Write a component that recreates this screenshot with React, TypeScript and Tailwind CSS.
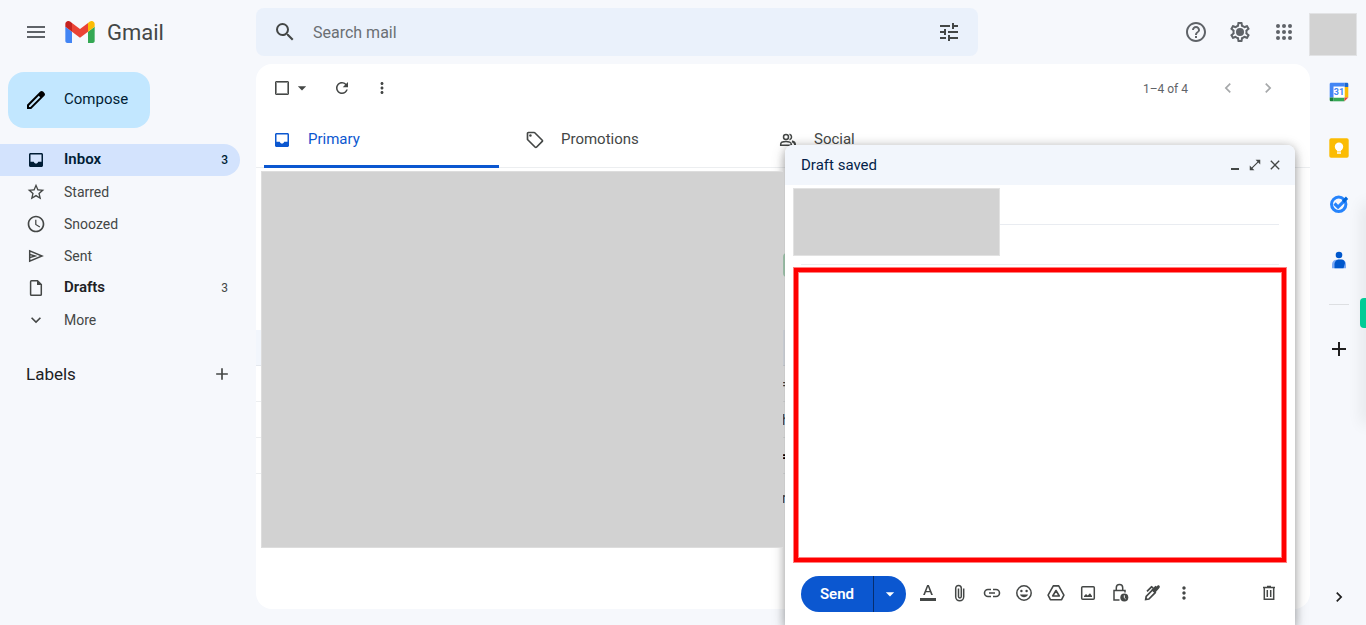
import React, { useState } from 'react';
import clsx from 'clsx';
import {
  MdAccessTime,
  MdAdd,
  MdArrowDropDown,
  MdChevronLeft,
  MdChevronRight,
  MdClose,
  MdHelpOutline,
  MdKeyboardArrowDown,
  MdMenu,
  MdMoreVert,
  MdOpenInFull,
  MdOutlineLocalOffer,
  MdRefresh,
  MdSearch,
  MdStarBorder,
  MdTune,
} from 'react-icons/md';

interface IconProps {
  className?: string;
}

type IconType = React.ComponentType<IconProps>;

const GmailLogo: React.FC<IconProps> = ({ className }) => (
  <svg viewBox="52 42 88 66" className={className} aria-hidden="true">
    <path fill="#4285f4" d="M58 108h14V74L52 59v43c0 3.32 2.69 6 6 6" />
    <path fill="#34a853" d="M120 108h14c3.32 0 6-2.69 6-6V59l-20 15" />
    <path fill="#fbbc04" d="M120 48v26l20-15v-8c0-7.42-8.47-11.65-14.4-7.2" />
    <path fill="#ea4335" d="M72 74V48l24 18 24-18v26L96 92" />
    <path fill="#c5221f" d="M52 51v8l20 15V48l-5.6-4.2c-5.94-4.45-14.4-.22-14.4 7.2" />
  </svg>
);

const PencilIcon: React.FC<IconProps> = ({ className }) => (
  <svg viewBox="0 0 24 24" fill="currentColor" className={className} aria-hidden="true">
    <path d="M20.41 4.94l-1.35-1.35c-.78-.78-2.05-.78-2.83 0L3 16.82V21h4.18L20.41 7.77c.79-.78.79-2.05 0-2.83zm-14 14.12L5 19v-1.36l9.82-9.82 1.41 1.41-9.82 9.83z" />
  </svg>
);

const GearIcon: React.FC<IconProps> = ({ className }) => (
  <svg viewBox="0 0 24 24" fill="currentColor" className={className} aria-hidden="true">
    <path d="M19.43 12.98c.04-.32.07-.64.07-.98 0-.34-.03-.66-.07-.98l2.11-1.65c.19-.15.24-.42.12-.64l-2-3.46a.5.5 0 0 0-.61-.22l-2.49 1c-.52-.4-1.08-.73-1.69-.98l-.38-2.65A.488.488 0 0 0 14 2h-4c-.25 0-.46.18-.49.42l-.38 2.65c-.61.25-1.17.59-1.69.98l-2.49-1a.566.566 0 0 0-.18-.03c-.17 0-.34.09-.43.25l-2 3.46c-.13.22-.07.49.12.64l2.11 1.65c-.04.32-.07.65-.07.98 0 .33.03.66.07.98l-2.11 1.65c-.19.15-.24.42-.12.64l2 3.46a.5.5 0 0 0 .61.22l2.49-1c.52.4 1.08.73 1.69.98l.38 2.65c.03.24.24.42.49.42h4c.25 0 .46-.18.49-.42l.38-2.65c.61-.25 1.17-.59 1.69-.98l2.49 1c.06.02.12.03.18.03.17 0 .34-.09.43-.25l2-3.46c.12-.22.07-.49-.12-.64l-2.11-1.65zm-1.98-1.71c.04.31.05.52.05.73 0 .21-.02.43-.05.73l-.14 1.13.89.7 1.08.84-.7 1.21-1.27-.51-1.04-.42-.9.68c-.43.32-.84.56-1.25.73l-1.06.43-.16 1.13-.2 1.35h-1.4l-.19-1.35-.16-1.13-1.06-.43c-.43-.18-.83-.41-1.23-.71l-.91-.7-1.06.43-1.27.51-.7-1.21 1.08-.84.89-.7-.14-1.13c-.03-.31-.05-.54-.05-.74s.02-.43.05-.73l.14-1.13-.89-.7-1.08-.84.7-1.21 1.27.51 1.04.42.9-.68c.43-.32.84-.56 1.25-.73l1.06-.43.16-1.13.2-1.35h1.39l.19 1.35.16 1.13 1.06.43c.43.18.83.41 1.23.71l.91.7 1.06-.43 1.27-.51.7 1.21-1.07.85-.89.7.14 1.13z" />
    <circle cx="12" cy="12" r="4" />
  </svg>
);

const AppsIcon: React.FC<IconProps> = ({ className }) => (
  <svg viewBox="0 0 24 24" fill="currentColor" className={className} aria-hidden="true">
    {[6, 12, 18].map((y) => [6, 12, 18].map((x) => <circle key={`${x}-${y}`} cx={x} cy={y} r="2" />))}
  </svg>
);

const InboxIcon: React.FC<IconProps> = ({ className }) => (
  <svg viewBox="0 0 20 20" fill="currentColor" fillRule="evenodd" className={className} aria-hidden="true">
    <path d="M4.500 3h11c.8 0 1.500.7 1.500 1.500v11c0 .8-.7 1.500-1.500 1.500h-11c-.8 0-1.500-.7-1.500-1.500v-11C3 3.700 3.700 3 4.500 3zm0 1.500v7.200h3.300c.3 1.100 1.100 1.800 2.200 1.800s1.900-.7 2.200-1.800h3.300V4.500z" />
  </svg>
);

const SentIcon: React.FC<IconProps> = ({ className }) => (
  <svg viewBox="0 0 20 20" fill="none" stroke="currentColor" strokeWidth="1.5" className={className} aria-hidden="true">
    <path d="M3.7 4.8v10.4L16 10 3.7 4.8zM3.7 8.4L9 10l-5.3 1.6" />
  </svg>
);

const DraftIcon: React.FC<IconProps> = ({ className }) => (
  <svg viewBox="0 0 20 20" fill="none" className={className} aria-hidden="true">
    <path d="M5.500 2.800h6l3.800 3.800v9.800c0 .5-.4.900-.9.900H5.500c-.5 0-.9-.4-.9-.9V3.700c0-.5.4-.9.900-.9z" stroke="currentColor" strokeWidth="1.500" />
    <path d="M11 2.500V7h4.500z" fill="currentColor" />
  </svg>
);

const PeopleIcon: React.FC<IconProps> = ({ className }) => (
  <svg viewBox="0 0 20 20" fill="none" stroke="currentColor" strokeWidth="1.500" className={className} aria-hidden="true">
    <circle cx="8" cy="7" r="2.500" />
    <path d="M2.700 15.300v-1.100c0-1.600 2.600-2.700 5.300-2.700s5.300 1.100 5.300 2.700v1.100z" />
    <path d="M11.500 4.300a2.800 2.800 0 0 1 0 5.400" />
    <path d="M14 11.300c1.900.6 3 1.700 3 3v1.700" strokeWidth="2" />
  </svg>
);

const FormatIcon: React.FC<IconProps> = ({ className }) => (
  <svg viewBox="0 0 20 20" fill="currentColor" className={className} aria-hidden="true">
    <path d="M2 15h16v3H2zM9.1 2h1.8l4 10h-1.8l-1-2.7H7.900L6.900 12H5.100L9.100 2zm-.7 5.900h3.200L10 3.700 8.400 7.900z" />
  </svg>
);

const AttachIcon: React.FC<IconProps> = ({ className }) => (
  <svg viewBox="0 0 20 20" fill="none" stroke="currentColor" strokeWidth="1.500" className={className} aria-hidden="true">
    <path d="M13.700 5.500v8.300a4 4 0 0 1-8 0V5.300a2.800 2.800 0 0 1 5.600 0v8.200a1.400 1.400 0 0 1-2.800 0V5.500" />
  </svg>
);

const LinkIcon: React.FC<IconProps> = ({ className }) => (
  <svg viewBox="0 0 20 20" fill="none" stroke="currentColor" strokeWidth="1.600" className={className} aria-hidden="true">
    <path d="M9 6.500H6a3.500 3.500 0 0 0 0 7h3M11 6.500h3a3.500 3.500 0 0 1 0 7h-3M7 10h6" />
  </svg>
);

const EmojiIcon: React.FC<IconProps> = ({ className }) => (
  <svg viewBox="0 0 20 20" fill="none" className={className} aria-hidden="true">
    <circle cx="10" cy="10" r="7.200" stroke="currentColor" strokeWidth="1.500" />
    <circle cx="7.400" cy="8" r="1.200" fill="currentColor" />
    <circle cx="12.600" cy="8" r="1.200" fill="currentColor" />
    <path d="M6 11.500h8c-.7 1.700-2.200 2.700-4 2.700s-3.300-1-4-2.700z" fill="currentColor" />
  </svg>
);

const DriveIcon: React.FC<IconProps> = ({ className }) => (
  <svg viewBox="0 0 20 20" fill="none" stroke="currentColor" strokeWidth="1.600" strokeLinejoin="round" className={className} aria-hidden="true">
    <path d="M7.300 2.900h5.400l5.200 9.200-2.300 4.600H4.400l-2.300-4.600z" />
    <path d="M10 7.500l3.300 5.500H6.700z" />
  </svg>
);

const PhotoIcon: React.FC<IconProps> = ({ className }) => (
  <svg viewBox="0 0 20 20" fill="none" className={className} aria-hidden="true">
    <rect x="3.700" y="3.700" width="12.600" height="12.600" rx="1" stroke="currentColor" strokeWidth="1.500" />
    <path d="M6 14v-1l2-2 1.700 1.500L12 10.300l2 2.700v1z" fill="currentColor" />
  </svg>
);

const LockClockIcon: React.FC<IconProps> = ({ className }) => (
  <svg viewBox="0 0 20 20" fill="none" className={className} aria-hidden="true">
    <path d="M9.500 17H4V7.500h11V9.500M6.300 7.500V4.800a3.200 3.200 0 0 1 6.400 0v2.700" stroke="currentColor" strokeWidth="1.500" />
    <circle cx="14.300" cy="14.500" r="4" fill="currentColor" />
    <path d="M14.300 12.300v2.400l1.300 1.200" stroke="#fff" strokeWidth="1" />
  </svg>
);

const SignatureIcon: React.FC<IconProps> = ({ className }) => (
  <svg viewBox="0 0 20 20" fill="none" className={className} aria-hidden="true">
    <path d="M3.700 16.500l.5-3.200 6.300-6.300 2.700 2.700-6.300 6.300z" stroke="currentColor" strokeWidth="1.700" />
    <path d="M9.500 6.500l4-3.700 1 .8.900-.8c.6-.6 1.500-.6 2 0 .6.600.6 1.500 0 2.100L13 10z" fill="currentColor" />
    <path d="M5 8.300l4.500-4.500 1.700 1.200" stroke="currentColor" strokeWidth="1.700" />
  </svg>
);

const TrashIcon: React.FC<IconProps> = ({ className }) => (
  <svg viewBox="0 0 20 20" fill="none" stroke="currentColor" strokeWidth="1.500" className={className} aria-hidden="true">
    <path d="M4 4.500h12M8 3.500h4M5.300 5v11.200h9.400V5M8.300 7v7M11.700 7v7" />
  </svg>
);

const CalendarIcon: React.FC<IconProps> = ({ className }) => (
  <svg viewBox="0 0 20 20" className={className} aria-hidden="true">
    <path d="M2 .7h13.500v4.300H5v10.500H.7V2C.7 1.300 1.300.7 2 .7z" fill="#4285f4" />
    <path d="M15.500.7H18c.7 0 1.300.6 1.300 1.300v3h-3.800z" fill="#1967d2" />
    <path d="M15.500 5h3.800v10.500h-3.800z" fill="#fbbc04" />
    <path d="M4.500 15.500h11v3.800h-11z" fill="#34a853" />
    <path d="M.7 15.500h3.800v3.800H2c-.7 0-1.300-.6-1.300-1.300z" fill="#188038" />
    <path d="M15.500 15.500h3.800l-3.800 3.800z" fill="#ea4335" />
    <path d="M4.500 4.500h11v11h-11z" fill="#fff" />
    <text x="10" y="13" textAnchor="middle" fontSize="9" fontWeight="700" fill="#4285f4">
      31
    </text>
  </svg>
);

const KeepIcon: React.FC<IconProps> = ({ className }) => (
  <svg viewBox="0 0 20 20" className={className} aria-hidden="true">
    <rect x=".3" y=".3" width="19.400" height="19.400" rx="1.800" fill="#fbbc04" />
    <circle cx="10" cy="8.800" r="4.200" fill="#fff" />
    <path d="M8 11h4v2.500H8zM8 14.300h4v1.500H8z" fill="#fff" />
  </svg>
);

const TasksIcon: React.FC<IconProps> = ({ className }) => (
  <svg viewBox="0 0 20 20" fill="none" className={className} aria-hidden="true">
    <circle cx="9.700" cy="10.300" r="7.200" stroke="#2684fc" strokeWidth="3" />
    <path d="M5.500 9.500l3.600 3.600 6.500-6.500" stroke="#2684fc" strokeWidth="3.200" />
    <path d="M13 6.500l3.900-3.900 2.300 2.300-4 4z" fill="#0066da" />
  </svg>
);

const ContactsIcon: React.FC<IconProps> = ({ className }) => (
  <svg viewBox="0 0 20 20" className={className} aria-hidden="true">
    <circle cx="10" cy="5" r="3.300" fill="#0057cc" />
    <path d="M3 18.300v-3.800C3 11.600 5 9.800 7.500 9.800h5c2.600 0 4.500 1.800 4.500 4.700v3.800z" fill="#7baaf7" />
    <path d="M5.500 18.300v-4c0-2.600 1.800-4.800 4.500-4.800h2.500c2.300 0 3.500 1.800 3.500 3.800l-1.500 5z" fill="#0057cc" />
  </svg>
);

interface Folder {
  name: string;
  icon: IconType;
  count?: number;
  active?: boolean;
  bold?: boolean;
}

const folders: Folder[] = [
  { name: 'Inbox', icon: InboxIcon, count: 3, active: true, bold: true },
  { name: 'Starred', icon: MdStarBorder },
  { name: 'Snoozed', icon: MdAccessTime },
  { name: 'Sent', icon: SentIcon },
  { name: 'Drafts', icon: DraftIcon, count: 3, bold: true },
  { name: 'More', icon: MdKeyboardArrowDown },
];

const tabs: { name: string; icon: IconType }[] = [
  { name: 'Primary', icon: InboxIcon },
  { name: 'Promotions', icon: MdOutlineLocalOffer },
  { name: 'Social', icon: PeopleIcon },
];

const composeTools: { name: string; icon: IconType }[] = [
  { name: 'Formatting options', icon: FormatIcon },
  { name: 'Attach files', icon: AttachIcon },
  { name: 'Insert link', icon: LinkIcon },
  { name: 'Insert emoji', icon: EmojiIcon },
  { name: 'Insert files using Drive', icon: DriveIcon },
  { name: 'Insert photo', icon: PhotoIcon },
  { name: 'Confidential mode', icon: LockClockIcon },
  { name: 'Insert signature', icon: SignatureIcon },
  { name: 'More options', icon: MdMoreVert },
];

const IconButton: React.FC<{ label: string; className?: string; children: React.ReactNode }> = ({
  label,
  className,
  children,
}) => (
  <button type="button" aria-label={label} className={clsx('flex shrink-0 items-center justify-center', className)}>
    {children}
  </button>
);

const Header: React.FC = () => (
  <header className="flex h-16 shrink-0 items-center pr-[9px] text-[#5f6368]">
    <div className="flex w-64 shrink-0 items-center pl-4">
      <IconButton label="Main menu" className="size-10">
        <MdMenu className="size-6" />
      </IconButton>
      <a href="#inbox" className="ml-[9px] flex items-center gap-3">
        <GmailLogo className="h-[22px] w-[30px]" />
        <span className="pt-0.5 text-[22px] leading-8 text-[#444746]">Gmail</span>
      </a>
    </div>
    <form className="flex h-12 w-full max-w-[722px] items-center rounded-lg bg-[#eaf1fb] px-[9px] text-[#444746]">
      <IconButton label="Search" className="size-10">
        <MdSearch className="size-6" />
      </IconButton>
      <input
        type="text"
        aria-label="Search mail"
        placeholder="Search mail"
        className="ml-2 min-w-0 flex-1 bg-transparent pt-0.5 text-base outline-none placeholder:text-[#6b6f73]"
      />
      <IconButton label="Show search options" className="size-10">
        <MdTune className="size-6" />
      </IconButton>
    </form>
    <div className="ml-auto flex items-center">
      <IconButton label="Support" className="w-11">
        <MdHelpOutline className="size-6" />
      </IconButton>
      <IconButton label="Settings" className="w-11">
        <GearIcon className="size-6" />
      </IconButton>
      <IconButton label="Google apps" className="w-11">
        <AppsIcon className="size-6" />
      </IconButton>
      <div className="ml-[3px] mt-1 h-[43px] w-12 shrink-0 border border-[#e2e3e5] bg-[#d2d2d2]" />
    </div>
  </header>
);

const Sidebar: React.FC = () => (
  <aside className="w-64 shrink-0 text-sm text-[#444746]">
    <button
      type="button"
      className="ml-2 mt-2 flex h-14 w-[142px] items-center gap-4 rounded-2xl bg-[#c2e7ff] pl-4 text-[15px] text-[#001d35]"
    >
      <PencilIcon className="size-6 text-black" />
      Compose
    </button>
    <nav className="mr-4 mt-4">
      {folders.map(({ name, icon: Icon, count, active, bold }) => (
        <a
          key={name}
          href={`#${name.toLowerCase()}`}
          className={clsx(
            'flex h-8 items-center gap-[18px] rounded-r-full pl-[26px] pr-3',
            active && 'bg-[#d3e3fd] text-[#001d35]'
          )}
        >
          <Icon className="size-5 shrink-0" />
          <span
            className={clsx('flex-1', bold && 'text-[15px] font-semibold', bold && !active && 'text-[#202124]')}
          >
            {name}
          </span>
          {count && <span className={clsx('text-xs', active && 'font-medium')}>{count}</span>}
        </a>
      ))}
    </nav>
    <div className="mr-6 mt-5 flex h-9 items-center justify-between pl-[26px]">
      <h2 className="text-[17px] text-[#202124]">Labels</h2>
      <IconButton label="Create new label">
        <MdAdd className="size-5" />
      </IconButton>
    </div>
  </aside>
);

const MailList: React.FC = () => {
  const [tab, setTab] = useState<string>('Primary');

  return (
    <main className="relative mb-4 min-w-0 flex-1 overflow-hidden rounded-2xl bg-white text-[#444746]">
      <div className="flex h-12 items-center pl-[19px] pr-[22px]">
        <input
          type="checkbox"
          aria-label="Select all"
          className="size-3.5 appearance-none rounded-[1px] border border-[#444746] ring-1 ring-inset ring-[#8f9190]"
        />
        <IconButton label="Select" className="ml-[3px]">
          <MdArrowDropDown className="size-5" />
        </IconButton>
        <IconButton label="Refresh" className="ml-2.5 w-10">
          <MdRefresh className="size-[18px]" />
        </IconButton>
        <IconButton label="More" className="w-10">
          <MdMoreVert className="size-[18px]" />
        </IconButton>
        <span className="ml-auto mr-5 pt-0.5 text-xs text-[#5f6368]">1–4 of 4</span>
        <IconButton label="Newer" className="w-10 text-[#a6a8aa]">
          <MdChevronLeft className="size-5" />
        </IconButton>
        <IconButton label="Older" className="w-10 text-[#a6a8aa]">
          <MdChevronRight className="size-5" />
        </IconButton>
      </div>
      <div role="tablist" className="flex h-14 border-b border-[#eceef0] text-[15px]">
        {tabs.map(({ name, icon: Icon }) => (
          <button
            key={name}
            type="button"
            role="tab"
            aria-selected={tab === name}
            onClick={() => setTab(name)}
            className={clsx('-mb-px w-[253px] pl-2 pr-2.5', tab === name && 'text-[#0b57d0]')}
          >
            <span
              className={clsx(
                'flex h-full items-center gap-4 rounded-t-[3px] border-b-[3px] pl-2 pt-0.5',
                tab === name ? 'border-[#0b57d0]' : 'border-transparent'
              )}
            >
              <Icon className="size-5" />
              {name}
            </span>
          </button>
        ))}
      </div>
      <ul className="mr-6 text-sm">
        <li className="flex h-[162px] items-center pl-[527px]">
          <span className="mt-8 h-6 w-8 rounded bg-[#b7e1c5]" />
        </li>
        <li className="h-9 border-b border-[#e3e7ed] bg-[#f2f6fc]" />
        <li className="flex h-9 items-center border-b border-[#eceef0] pl-[526px]">=</li>
        <li className="flex h-9 items-center border-b border-[#eceef0] pl-[526px]">h</li>
        <li className="flex h-9 items-center border-b border-[#eceef0] pl-[526px] font-bold text-black">=</li>
        <li className="flex h-12 items-center pl-[526px]">r</li>
      </ul>
    </main>
  );
};

const SidePanel: React.FC = () => (
  <aside className="flex w-14 shrink-0 flex-col items-center pb-[18px] pl-0.5 pt-[18px] text-[#1f1f1f]">
    <div className="flex flex-col gap-9">
      <IconButton label="Calendar">
        <CalendarIcon className="size-5" />
      </IconButton>
      <IconButton label="Keep">
        <KeepIcon className="size-5" />
      </IconButton>
      <IconButton label="Tasks">
        <TasksIcon className="size-5" />
      </IconButton>
      <IconButton label="Contacts">
        <ContactsIcon className="size-5" />
      </IconButton>
    </div>
    <hr className="mt-[34px] w-5 border-[#dddfe2]" />
    <IconButton label="Get add-ons" className="mt-8">
      <MdAdd className="size-6" />
    </IconButton>
    <IconButton label="Hide side panel" className="mt-auto">
      <MdChevronRight className="size-5" />
    </IconButton>
  </aside>
);

const ComposeWindow: React.FC = () => {
  const [body, setBody] = useState<string>('');

  return (
    <section className="absolute bottom-0 right-[71px] z-10 w-[510px] rounded-t-lg bg-white text-[#444746] shadow-[0_8px_10px_1px_rgba(0,0,0,0.14),0_3px_14px_2px_rgba(0,0,0,0.12),0_0_8px_0_rgba(0,0,0,0.16)]">
      <div className="flex h-10 items-center rounded-t-lg bg-[#f2f6fc] pl-4 pr-2.5">
        <h2 className="flex-1 text-[15px] text-[#041e49]">Draft saved</h2>
        <IconButton label="Minimize" className="w-5">
          <svg viewBox="0 0 16 16" className="size-4" aria-hidden="true">
            <path d="M4 11h8v2H4z" fill="currentColor" />
          </svg>
        </IconButton>
        <IconButton label="Full screen" className="w-5">
          <MdOpenInFull className="size-3.5" />
        </IconButton>
        <IconButton label="Save and close" className="w-5">
          <MdClose className="size-4" />
        </IconButton>
      </div>
      <div className="relative px-4">
        <div className="h-10 border-b border-[#e9ecf1]" />
        <div className="h-10 border-b border-[#eceef0]" />
        <div className="absolute left-2 top-[3px] h-[68px] w-[207px] border border-[#e2e2e2] bg-[#d2d2d2]" />
      </div>
      <textarea
        aria-label="Message body"
        value={body}
        onChange={(e) => setBody(e.target.value)}
        className="mx-[9px] mt-[3px] block h-[294px] w-[492px] resize-none border-4 border-[#ff0000] p-3 text-sm outline-1 outline-[#ff8080] ring-1 ring-inset ring-[#ff8080]"
      />
      <div className="flex items-center px-4 pb-[13px] pt-3.5">
        <div className="mr-1.5 flex h-9 rounded-full bg-[#0b57d0] text-white">
          <button type="button" className="w-[73px] border-r border-[#062e6f] text-[15px] font-semibold">
            Send
          </button>
          <IconButton label="More send options" className="w-8">
            <MdArrowDropDown className="size-5" />
          </IconButton>
        </div>
        <div className="flex flex-1 items-center pb-0.5">
          {composeTools.map(({ name, icon: Icon }) => (
            <IconButton key={name} label={name} className="w-8">
              <Icon className="size-5" />
            </IconButton>
          ))}
          <IconButton label="Discard draft" className="ml-auto">
            <TrashIcon className="size-5" />
          </IconButton>
        </div>
      </div>
    </section>
  );
};

const App: React.FC = () => (
  <div className="relative flex h-screen flex-col overflow-hidden bg-[#f6f8fc] font-[Roboto,'Liberation_Sans',sans-serif]">
    <Header />
    <div className="flex min-h-0 flex-1">
      <Sidebar />
      <MailList />
      <SidePanel />
    </div>
    <ComposeWindow />
    {/* hidden message list */}
    <div className="absolute left-[261px] top-[171px] z-20 h-[377px] w-[522px] border border-r-0 border-[#dddddd] bg-[#d2d2d2]" />
    {/* extension handle docked to the window edge */}
    <div className="absolute -right-1 top-[206px] h-[216px] w-1 shadow-[0_0_16px_2px_rgba(0,0,0,0.12)]" />
    <div className="absolute right-0 top-[298px] h-[30px] w-1.5 rounded-l bg-[#00cc96]" />
  </div>
);

export default App;
